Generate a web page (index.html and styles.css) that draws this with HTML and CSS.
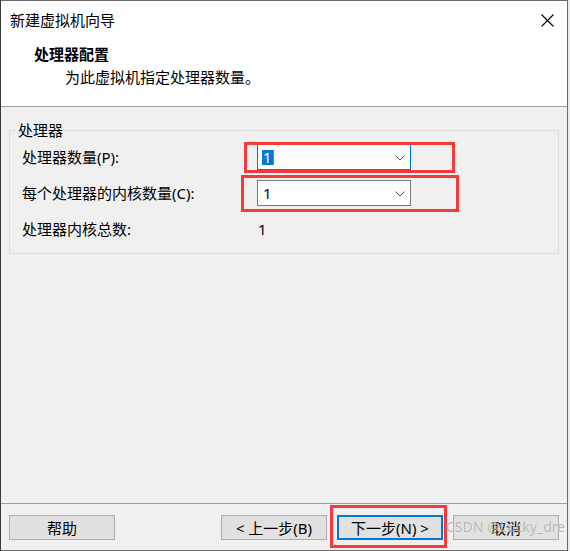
FILE: index.html
```html
<!DOCTYPE html>
<html lang="zh-CN">
<head>
<meta charset="utf-8">
<title>新建虚拟机向导</title>
<link rel="stylesheet" href="styles.css">
</head>
<body>
<div class="window">
  <div class="header">
    <div class="titlebar">
      <span class="title">新建虚拟机向导</span>
      <svg class="close" width="13" height="13" viewBox="0 0 13 13"><path d="M0.5 0.5 L12.5 12.5 M12.5 0.5 L0.5 12.5" stroke="#000" stroke-width="1.1" fill="none"/></svg>
    </div>
    <div class="heading">处理器配置</div>
    <div class="sub">为此虚拟机指定处理器数量。</div>
  </div>
  <div class="main">
    <fieldset class="group">
      <legend>处理器</legend>
      <div class="rows">
        <div class="lbl">处理器数量(P):</div>
        <div class="combo focus"><span class="sel">1</span><span class="caret"></span>
          <svg class="chev" width="10" height="6" viewBox="0 0 10 6"><path d="M0.5 0.5 L5 5 L9.5 0.5" stroke="#5a5a5a" stroke-width="1" fill="none"/></svg>
        </div>
        <div class="lbl">每个处理器的内核数量(C):</div>
        <div class="combo"><span class="val">1</span>
          <svg class="chev" width="10" height="6" viewBox="0 0 10 6"><path d="M0.5 0.5 L5 5 L9.5 0.5" stroke="#5a5a5a" stroke-width="1" fill="none"/></svg>
        </div>
        <div class="lbl">处理器内核总数:</div>
        <div class="total">1</div>
      </div>
    </fieldset>
  </div>
  <div class="footer">
    <button class="btn">帮助</button>
    <div class="spacer"></div>
    <button class="btn">&lt; 上一步(B)</button>
    <button class="btn default">下一步(N) &gt;</button>
    <button class="btn">取消</button>
  </div>
</div>
<div class="mark mark1"></div>
<div class="mark mark2"></div>
<div class="mark mark3"></div>
<div class="watermark">CSDN @Lucky_dre</div>
</body>
</html>
```

FILE: styles.css
```css
html, body {
  margin: 0;
  padding: 0;
}
body {
  position: relative;
  width: 570px;
  height: 551px;
  background: #ececec;
  font-family: "Noto Sans", "Noto Sans CJK SC", sans-serif;
  font-size: 15px;
  color: #000;
  overflow: hidden;
}
.window {
  box-sizing: border-box;
  width: 568px;
  height: 551px;
  border: 1px solid #6a6a6a;
  border-left-color: #3a3a3a;
  background: #f0f0f0;
  display: flex;
  flex-direction: column;
}
.header {
  background: #fff;
  border-bottom: 1px solid #a0a0a0;
  padding-bottom: 19px;
}
.titlebar {
  display: flex;
  align-items: center;
  justify-content: space-between;
  padding: 8px 13px 0 9px;
  height: 22px;
}
.title {
  line-height: 20px;
}
.close {
  display: block;
}
.heading {
  margin: 13px 0 0 33px;
  font-weight: bold;
  line-height: 20px;
}
.sub {
  margin: 3px 0 0 64px;
  line-height: 20px;
}
.main {
  flex: 1;
  padding-top: 13px;
}
.group {
  margin: 0 8px;
  padding: 4px 12px 11px 12px;
  border: 1px solid #dcdcdc;
  min-width: 0;
}
.group legend {
  padding: 0 2px;
  margin-left: -6px;
  line-height: 20px;
}
.rows {
  display: grid;
  grid-template-columns: 235px 154px;
  grid-auto-rows: 26px;
  row-gap: 10px;
  align-items: center;
}
.lbl {
  line-height: 20px;
}
.combo {
  position: relative;
  box-sizing: border-box;
  height: 26px;
  background: #fff;
  border: 1px solid #7a7a7a;
  display: flex;
  align-items: center;
  padding-left: 4px;
}
.combo.focus {
  border-color: #0078d7;
}
.sel {
  background: #0078d7;
  color: #fff;
  line-height: 15px;
  padding: 0 1px;
}
.caret {
  width: 1px;
  height: 15px;
  background: #d06a1a;
}
.val {
  line-height: 20px;
  padding-left: 1px;
  color: #000030;
}
.chev {
  position: absolute;
  right: 5px;
  top: 10px;
}
.total {
  padding-left: 1px;
  line-height: 20px;
  color: #000030;
}
.footer {
  border-top: 1px solid #a0a0a0;
  padding: 11px 8px 10px 8px;
  display: flex;
  gap: 10px;
}
.spacer {
  flex: 1;
}
.btn {
  box-sizing: border-box;
  width: 106px;
  height: 25px;
  margin: 0;
  padding: 0;
  background: #e1e1e1;
  border: 1px solid #adadad;
  font-family: inherit;
  font-size: 15px;
  color: #000;
  line-height: 20px;
}
.btn.default {
  border: 2px solid #0078d7;
}
.mark {
  position: absolute;
  box-sizing: border-box;
  border: 3px solid #f43a3a;
}
.mark1 {
  left: 244px;
  top: 142px;
  width: 211px;
  height: 31px;
}
.mark2 {
  left: 241px;
  top: 175px;
  width: 218px;
  height: 37px;
}
.mark3 {
  left: 330px;
  top: 505px;
  width: 117px;
  height: 43px;
}
.watermark {
  position: absolute;
  left: 446px;
  top: 518px;
  font-family: "Noto Sans", sans-serif;
  font-size: 14px;
  line-height: 18px;
  color: rgba(140, 140, 140, 0.6);
  text-shadow: 0 0 1px rgba(255, 255, 255, 0.8);
}
```
